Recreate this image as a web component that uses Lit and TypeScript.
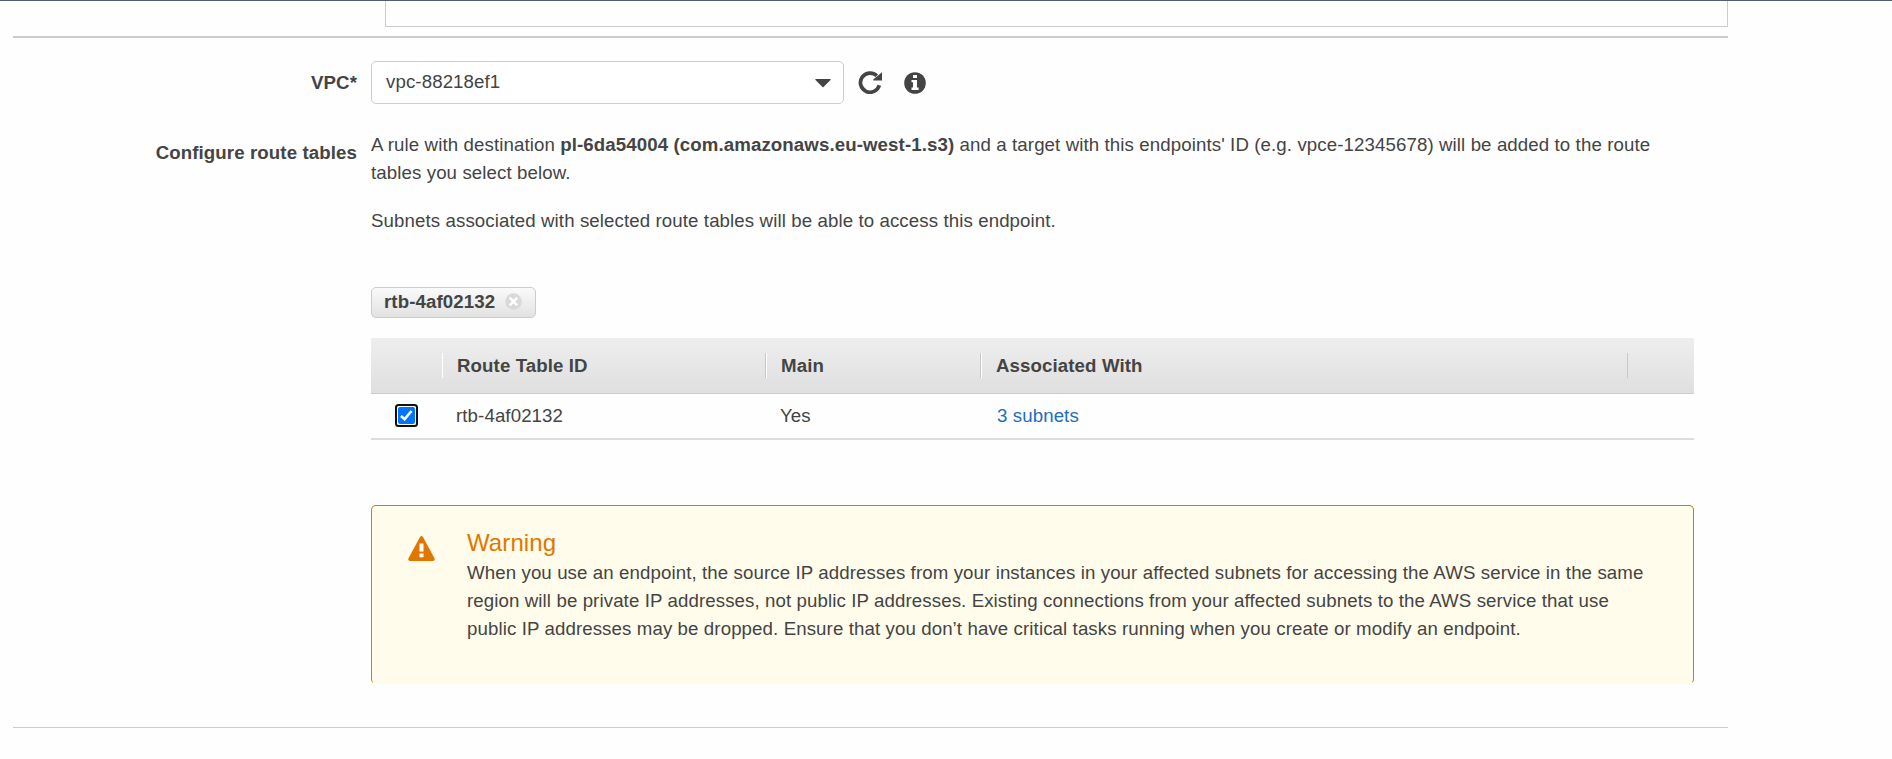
import { LitElement, html, css } from "lit";
import { customElement } from "lit/decorators.js";

@customElement("app-root")
export class AppRoot extends LitElement {
  static styles = css`
    :host {
      display: block;
      box-sizing: border-box;
      width: 100%;
      height: 759px;
      overflow: hidden;
      background: #fefefe;
      border-top: 1px solid #545b6b;
      color: #444;
      font: 18.667px/28px "Liberation Sans", Arial, sans-serif;
      letter-spacing: 0.105px;
    }
    * { box-sizing: border-box; }
    svg { display: block; flex: none; }
    p { margin: 0; }
    .page { width: 1715px; margin-left: 13px; }
    .panel-end { height: 26px; margin-left: 372px; border: 1px solid #ccc; border-top: 0; }
    .form { margin-top: 9px; border-top: 2px solid #ccc; border-bottom: 1px solid #ccc; height: 692px; padding-top: 23px; }
    .row { display: grid; grid-template-columns: 344px 1323px; column-gap: 14px; }
    .label { text-align: right; font-weight: bold; }
    .vpc { align-items: center; height: 43px; }
    .controls { display: flex; align-items: center; height: 43px; }
    .select { width: 473px; height: 43px; border: 1px solid #ccc; border-radius: 5px; background: #fff; padding: 0 12px 2px 14px; display: flex; align-items: center; justify-content: space-between; }
    .caret { margin-top: 3px; }
    .refresh { margin-left: 14px; }
    .info { margin-left: 22px; }
    .routes { margin-top: 27px; }
    .routes > .label { padding-top: 8px; }
    .copy { width: 1300px; }
    .copy + .copy { margin-top: 20px; }
    .tag { width: 165px; height: 31px; margin-top: 52px; padding: 0 13px 2px 12px; border: 1px solid #ccc; border-radius: 5px; background: linear-gradient(#fafafa, #e2e2e2); font-weight: bold; display: flex; align-items: center; justify-content: space-between; }
    .grid { margin-top: 20px; }
    .line { display: grid; grid-template-columns: 71px 324px 215px 647px 66px; align-items: center; }
    .head { height: 56px; background: linear-gradient(#eee, #dfdfdf); border-bottom: 1px solid #ccc; font-weight: bold; }
    .head > div { height: 25px; line-height: 25px; padding-left: 14px; border-left: 1px solid #fff; border-right: 1px solid #c8c8c8; }
    .head > div:first-child { border: 0; }
    .head > div:last-child { border: 0; }
    .body { height: 46px; border-bottom: 2px solid #ddd; }
    .body > div { padding-left: 14px; }
    .body > .pick { padding: 0 0 1px 24px; }
    .body > .link { padding-left: 16px; color: #1b6ec2; }
    .warning { margin-top: 65px; height: 179px; border: 1px solid #e07700; border-bottom-color: #fffceb; border-radius: 5px; background: #fffceb; display: flex; padding: 22px 0 0 36px; }
    .sign { margin: 8px 32px 0 0; }
    .title { font-size: 24px; line-height: 30px; height: 31px; color: #e07700; }
    .message { width: 1190px; }
  `;

  render() {
    return html`
      <main class="page">
        <div class="panel-end"></div>
        <section class="form">
          <div class="row vpc">
            <div class="label">VPC*</div>
            <div class="controls">
              <div class="select">
                <span>vpc-88218ef1</span>
                <svg class="caret" width="16" height="9" viewBox="0 0 16 9"><path d="M.6 0H15.4Q16 .4 15.5 1L8 8.6L.5 1Q0 .4.6 0Z" fill="#444" /></svg>
              </div>
              <svg class="refresh" width="24" height="23" viewBox="0 0 24 23">
                <path d="M21.3 14.3A9.6 9.6 0 1 1 18.8 4.8" fill="none" stroke="#444" stroke-width="3.7" />
                <path d="M24 1.2V9.6H15.2V8.6Z" fill="#444" />
              </svg>
              <svg class="info" width="22" height="22" viewBox="0 0 22 22">
                <circle cx="11" cy="11" r="10.8" fill="#444" />
                <path d="M9 3H13V6H9ZM7.5 8H13V15.5H14.6V18H7.5V15.5H9V10.3H7.5Z" fill="#fff" />
              </svg>
            </div>
          </div>
          <div class="row routes">
            <div class="label">Configure route tables</div>
            <div>
              <p class="copy">A rule with destination <b>pl-6da54004 (com.amazonaws.eu-west-1.s3)</b> and a target with this endpoints' ID (e.g. vpce-12345678) will be added to the route tables you select below.</p>
              <p class="copy">Subnets associated with selected route tables will be able to access this endpoint.</p>
              <div class="tag">
                <span>rtb-4af02132</span>
                <svg width="17" height="17" viewBox="0 0 17 17">
                  <circle cx="8.5" cy="8.5" r="8.3" fill="#d9d9d9" />
                  <path d="M4.7 4.7L12.3 12.3M12.3 4.7L4.7 12.3" stroke="#fff" stroke-width="2.4" />
                </svg>
              </div>
              <div class="grid">
                <div class="line head">
                  <div></div><div>Route Table ID</div><div>Main</div><div>Associated With</div><div></div>
                </div>
                <div class="line body">
                  <div class="pick">
                    <svg width="23" height="23" viewBox="0 0 23 23">
                      <rect x="1" y="1" width="21" height="21" rx="2.5" fill="#fff" stroke="#101010" stroke-width="2" />
                      <rect x="3" y="3" width="17" height="17" rx="2" fill="#0075ff" />
                      <path d="M6 12L9.6 15.2L16.5 7" fill="none" stroke="#fff" stroke-width="2.6" />
                    </svg>
                  </div>
                  <div>rtb-4af02132</div><div>Yes</div><div class="link">3 subnets</div><div></div>
                </div>
              </div>
              <div class="warning">
                <svg class="sign" width="27" height="25" viewBox="0 0 27 25">
                  <path d="M12 1Q13.5-.8 15 1L26.6 22.5Q27 24.8 25 25H2Q0 24.8.4 22.5Z" fill="#e07700" />
                  <path d="M11.5 7.5H15.5V15.5H11.5ZM11.5 17.5H15.5V21.3H11.5Z" fill="#fff" />
                </svg>
                <div>
                  <div class="title">Warning</div>
                  <p class="message">When you use an endpoint, the source IP addresses from your instances in your affected subnets for accessing the AWS service in the same region will be private IP addresses, not public IP addresses. Existing connections from your affected subnets to the AWS service that use public IP addresses may be dropped. Ensure that you don’t have critical tasks running when you create or modify an endpoint.</p>
                </div>
              </div>
            </div>
          </div>
        </section>
      </main>
    `;
  }
}
